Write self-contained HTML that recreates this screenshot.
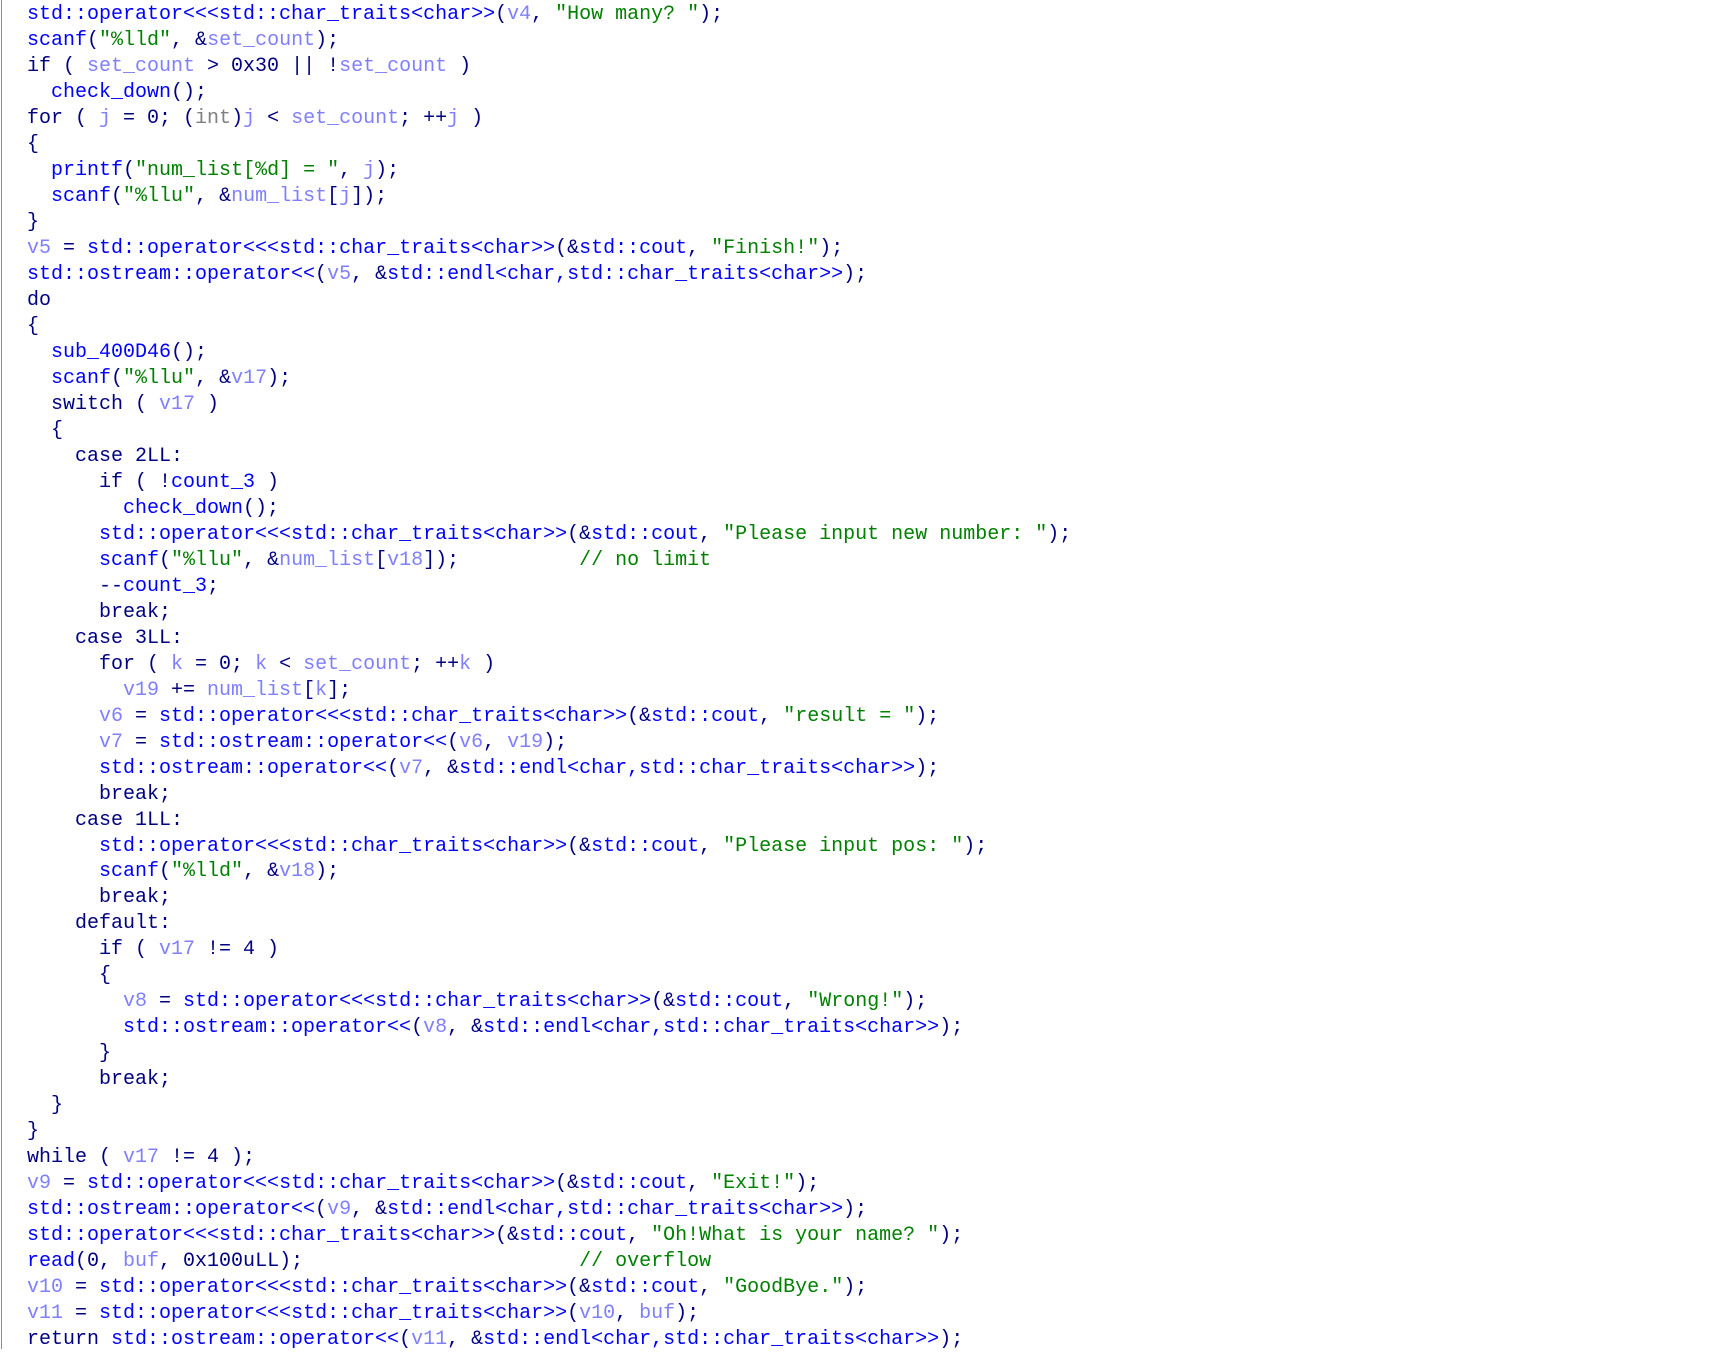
<!DOCTYPE html>
<html><head><meta charset="utf-8"><style>
html,body{margin:0;padding:0;background:#fff;width:1718px;height:1349px;overflow:hidden}
.b{position:absolute;left:1px;top:0;width:1px;height:1349px;background:#7a8fc0}
pre{position:absolute;left:27px;top:2px;margin:0;font-family:"Liberation Mono",monospace;font-size:20px;line-height:25.98px;color:#000080}
.f{color:#0000ff}.v{color:#7f7fff}.s{color:#008000}.g{color:#808080}
</style></head><body><div class="b"></div><pre><span class="f">std::operator&lt;&lt;&lt;std::char_traits&lt;char&gt;&gt;</span>(<span class="v">v4</span>, <span class="s">"How many? "</span>);
<span class="f">scanf</span>(<span class="s">"%lld"</span>, &amp;<span class="v">set_count</span>);
if ( <span class="v">set_count</span> &gt; 0x30 || !<span class="v">set_count</span> )
  <span class="f">check_down</span>();
for ( <span class="v">j</span> = 0; (<span class="g">int</span>)<span class="v">j</span> &lt; <span class="v">set_count</span>; ++<span class="v">j</span> )
{
  <span class="f">printf</span>(<span class="s">"num_list[%d] = "</span>, <span class="v">j</span>);
  <span class="f">scanf</span>(<span class="s">"%llu"</span>, &amp;<span class="v">num_list</span>[<span class="v">j</span>]);
}
<span class="v">v5</span> = <span class="f">std::operator&lt;&lt;&lt;std::char_traits&lt;char&gt;&gt;</span>(&amp;<span class="f">std::cout</span>, <span class="s">"Finish!"</span>);
<span class="f">std::ostream::operator&lt;&lt;</span>(<span class="v">v5</span>, &amp;<span class="f">std::endl&lt;char,std::char_traits&lt;char&gt;&gt;</span>);
do
{
  <span class="f">sub_400D46</span>();
  <span class="f">scanf</span>(<span class="s">"%llu"</span>, &amp;<span class="v">v17</span>);
  switch ( <span class="v">v17</span> )
  {
    case 2LL:
      if ( !<span class="f">count_3</span> )
        <span class="f">check_down</span>();
      <span class="f">std::operator&lt;&lt;&lt;std::char_traits&lt;char&gt;&gt;</span>(&amp;<span class="f">std::cout</span>, <span class="s">"Please input new number: "</span>);
      <span class="f">scanf</span>(<span class="s">"%llu"</span>, &amp;<span class="v">num_list</span>[<span class="v">v18</span>]);          <span class="s">// no limit</span>
      --<span class="f">count_3</span>;
      break;
    case 3LL:
      for ( <span class="v">k</span> = 0; <span class="v">k</span> &lt; <span class="v">set_count</span>; ++<span class="v">k</span> )
        <span class="v">v19</span> += <span class="v">num_list</span>[<span class="v">k</span>];
      <span class="v">v6</span> = <span class="f">std::operator&lt;&lt;&lt;std::char_traits&lt;char&gt;&gt;</span>(&amp;<span class="f">std::cout</span>, <span class="s">"result = "</span>);
      <span class="v">v7</span> = <span class="f">std::ostream::operator&lt;&lt;</span>(<span class="v">v6</span>, <span class="v">v19</span>);
      <span class="f">std::ostream::operator&lt;&lt;</span>(<span class="v">v7</span>, &amp;<span class="f">std::endl&lt;char,std::char_traits&lt;char&gt;&gt;</span>);
      break;
    case 1LL:
      <span class="f">std::operator&lt;&lt;&lt;std::char_traits&lt;char&gt;&gt;</span>(&amp;<span class="f">std::cout</span>, <span class="s">"Please input pos: "</span>);
      <span class="f">scanf</span>(<span class="s">"%lld"</span>, &amp;<span class="v">v18</span>);
      break;
    default:
      if ( <span class="v">v17</span> != 4 )
      {
        <span class="v">v8</span> = <span class="f">std::operator&lt;&lt;&lt;std::char_traits&lt;char&gt;&gt;</span>(&amp;<span class="f">std::cout</span>, <span class="s">"Wrong!"</span>);
        <span class="f">std::ostream::operator&lt;&lt;</span>(<span class="v">v8</span>, &amp;<span class="f">std::endl&lt;char,std::char_traits&lt;char&gt;&gt;</span>);
      }
      break;
  }
}
while ( <span class="v">v17</span> != 4 );
<span class="v">v9</span> = <span class="f">std::operator&lt;&lt;&lt;std::char_traits&lt;char&gt;&gt;</span>(&amp;<span class="f">std::cout</span>, <span class="s">"Exit!"</span>);
<span class="f">std::ostream::operator&lt;&lt;</span>(<span class="v">v9</span>, &amp;<span class="f">std::endl&lt;char,std::char_traits&lt;char&gt;&gt;</span>);
<span class="f">std::operator&lt;&lt;&lt;std::char_traits&lt;char&gt;&gt;</span>(&amp;<span class="f">std::cout</span>, <span class="s">"Oh!What is your name? "</span>);
<span class="f">read</span>(0, <span class="v">buf</span>, 0x100uLL);                       <span class="s">// overflow</span>
<span class="v">v10</span> = <span class="f">std::operator&lt;&lt;&lt;std::char_traits&lt;char&gt;&gt;</span>(&amp;<span class="f">std::cout</span>, <span class="s">"GoodBye."</span>);
<span class="v">v11</span> = <span class="f">std::operator&lt;&lt;&lt;std::char_traits&lt;char&gt;&gt;</span>(<span class="v">v10</span>, <span class="v">buf</span>);
return <span class="f">std::ostream::operator&lt;&lt;</span>(<span class="v">v11</span>, &amp;<span class="f">std::endl&lt;char,std::char_traits&lt;char&gt;&gt;</span>);</pre></body></html>
